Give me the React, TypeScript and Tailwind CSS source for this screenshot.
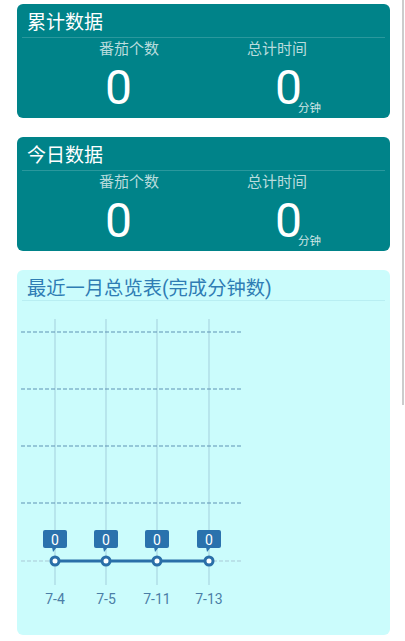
import React from "react";

const CJK = "font-['Roboto','Noto_Sans_CJK_SC',sans-serif]";

function StatCard({ title }: { title: string }) {
  return (
    <div className="h-[114px] rounded-[6px] bg-[#008389] text-white">
      <div className="px-[10px] pt-[5px] text-[19px] leading-[28px]">{title}</div>
      <div className="mx-[5px] h-px bg-[#2a989d]" />
      <div className="flex h-[22px] items-center text-[15px] leading-[20px] text-[#b9dcdd]">
        <span className="ml-[82px]">番茄个数</span>
        <span className="ml-[88px]">总计时间</span>
      </div>
      <div className="mt-[4px] flex items-end">
        <span className="ml-[88px] text-[48px] leading-[48px]">0</span>
        <span className="ml-[143px] text-[48px] leading-[48px]">0</span>
        <span className="mb-[-2px] ml-[-4px] text-[11.5px] leading-[11px] text-[#cfe6e6]">分钟</span>
      </div>
    </div>
  );
}

const xs = [38, 89, 140, 192];
const labels = ["7-4", "7-5", "7-11", "7-13"];
const grid = [31, 88, 145, 202];

function Chart() {
  return (
    <svg width="373" height="334" viewBox="0 0 373 334" className="block">
      {xs.map((x) => (
        <line key={"v" + x} x1={x} y1={18} x2={x} y2={284} stroke="#a3cfdc" strokeWidth={1} />
      ))}
      {grid.map((y) => (
        <line key={"h" + y} x1={4} y1={y} x2={225} y2={y} stroke="#5f93b4" strokeWidth={1} strokeDasharray="4 2" />
      ))}
      <line x1={4} y1={260} x2={225} y2={260} stroke="#a9c9d6" strokeWidth={1} strokeDasharray="4 2" />
      <line x1={38} y1={260} x2={192} y2={260} stroke="#2a6fa8" strokeWidth={3} />
      {xs.map((x) => (
        <g key={"p" + x}>
          <rect x={x - 12} y={229} width={24} height={18} rx={2} fill="#2a72ad" />
          <polygon points={`${x - 3},246 ${x + 2},246 ${x - 2},251`} fill="#2a72ad" />
          <text x={x} y={244} textAnchor="middle" fontSize="14" fill="#ffffff" fontFamily="Roboto, sans-serif">
            0
          </text>
          <circle cx={x} cy={260} r={4} fill="#ffffff" stroke="#2a6fa8" strokeWidth={3} />
        </g>
      ))}
      {xs.map((x, i) => (
        <text key={"l" + x} x={x} y={303} textAnchor="middle" fontSize="14" fill="#4b7ea6" fontFamily="Roboto, sans-serif">
          {labels[i]}
        </text>
      ))}
    </svg>
  );
}

export default function App() {
  return (
    <div className={`relative h-[641px] w-[405px] overflow-hidden bg-white ${CJK}`}>
      <div className="absolute right-[1px] top-0 h-[405px] w-[2px] bg-[#cccccc]" />
      <div className="flex flex-col gap-[19px] pl-[17px] pr-[15px] pt-[4px]">
        <StatCard title="累计数据" />
        <StatCard title="今日数据" />
        <div className="h-[365px] rounded-[6px] bg-[#cbfcfc]">
          <div className="px-[10px] pt-[7px] text-[19.3px] leading-[23px] text-[#2f7db4]">最近一月总览表(完成分钟数)</div>
          <div className="mx-[5px] h-px bg-[#b8eef2]" />
          <Chart />
        </div>
      </div>
    </div>
  );
}
